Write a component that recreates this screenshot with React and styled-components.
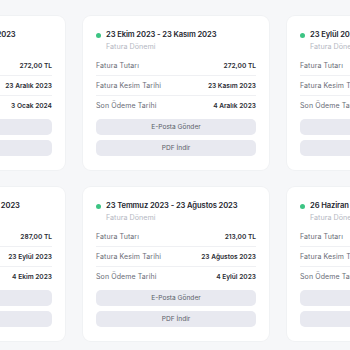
import React from 'react';
import styled, { createGlobalStyle } from 'styled-components';

const GlobalStyle = createGlobalStyle`
  html, body {
    margin: 0;
    padding: 0;
    background: #f6f7f9;
    overflow: hidden;
  }
  body {
    font-family: Inter, "Noto Sans", sans-serif;
  }
`;

const Page = styled.div`
  width: 350px;
  height: 350px;
  overflow: hidden;
  background: #f6f7f9;
`;

const Grid = styled.div`
  display: grid;
  grid-template-columns: repeat(3, 186px);
  column-gap: 18px;
  row-gap: 17px;
  margin-left: -121px;
  padding-top: 16px;
`;

const Card = styled.div`
  background: #ffffff;
  border-radius: 8px;
  padding: 13px 13px 14px;
  box-shadow: 0 0 0 1px rgba(20, 30, 60, 0.025);
`;

const Header = styled.div`
  display: flex;
  align-items: flex-start;
  gap: 5px;
`;

const Dot = styled.span`
  flex: none;
  width: 5px;
  height: 5px;
  border-radius: 50%;
  margin-top: 3.5px;
  background: #3cc483;
`;

const Title = styled.div`
  font-size: 7.6px;
  font-weight: 600;
  letter-spacing: -0.1px;
  line-height: 12px;
  color: #23252e;
  white-space: nowrap;
`;

const Subtitle = styled.div`
  margin-top: 1px;
  font-size: 7.2px;
  line-height: 10px;
  color: #b4b7c2;
`;

const Rows = styled.div`
  margin-top: 4px;
`;

const Row = styled.div`
  display: flex;
  justify-content: space-between;
  align-items: center;
  height: 19px;
  border-bottom: 1px solid ${p => (p.last ? 'transparent' : '#eff0f3')};
`;

const Label = styled.span`
  font-size: 7px;
  letter-spacing: 0.1px;
  color: #686b75;
`;

const Value = styled.span`
  font-size: 6.6px;
  font-weight: 600;
  color: #2a2c34;
`;

const Actions = styled.div`
  display: flex;
  flex-direction: column;
  gap: 5px;
  margin-top: 3px;
`;

const Button = styled.button`
  height: 16px;
  border: none;
  border-radius: 5px;
  background: #e8e9f0;
  color: #5a5d68;
  font-family: inherit;
  font-size: 6.6px;
  padding: 0;
`;

const invoices = [
  ['23 Kasım 2023 - 23 Aralık 2023', '272,00 TL', '23 Aralık 2023', '3 Ocak 2024'],
  ['23 Ekim 2023 - 23 Kasım 2023', '272,00 TL', '23 Kasım 2023', '4 Aralık 2023'],
  ['23 Eylül 2023 - 23 Ekim 2023', '272,00 TL', '23 Ekim 2023', '3 Kasım 2023'],
  ['23 Ağustos 2023 - 23 Eylül 2023', '287,00 TL', '23 Eylül 2023', '4 Ekim 2023'],
  ['23 Temmuz 2023 - 23 Ağustos 2023', '213,00 TL', '23 Ağustos 2023', '4 Eylül 2023'],
  ['26 Haziran 2023 - 23 Temmuz 2023', '198,00 TL', '23 Temmuz 2023', '3 Ağustos 2023'],
];

const InvoiceCard = ({ period, amount, issued, due }) => (
  <Card>
    <Header>
      <Dot />
      <div>
        <Title>{period}</Title>
        <Subtitle>Fatura Dönemi</Subtitle>
      </div>
    </Header>
    <Rows>
      <Row>
        <Label>Fatura Tutarı</Label>
        <Value>{amount}</Value>
      </Row>
      <Row>
        <Label>Fatura Kesim Tarihi</Label>
        <Value>{issued}</Value>
      </Row>
      <Row last>
        <Label>Son Ödeme Tarihi</Label>
        <Value>{due}</Value>
      </Row>
    </Rows>
    <Actions>
      <Button>E-Posta Gönder</Button>
      <Button>PDF İndir</Button>
    </Actions>
  </Card>
);

export default function App() {
  return (
    <Page>
      <GlobalStyle />
      <Grid>
        {invoices.map(([period, amount, issued, due]) => (
          <InvoiceCard
            key={period}
            period={period}
            amount={amount}
            issued={issued}
            due={due}
          />
        ))}
      </Grid>
    </Page>
  );
}
